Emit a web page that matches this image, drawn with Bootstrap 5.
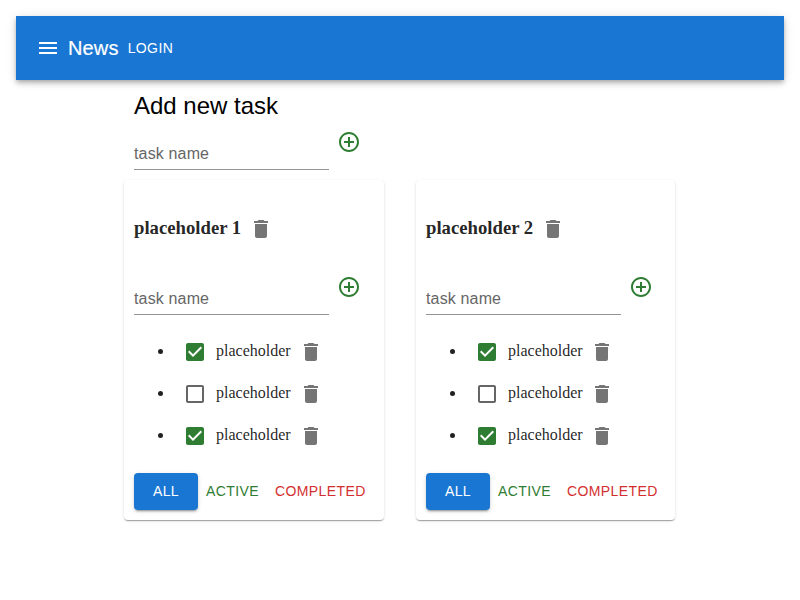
<!DOCTYPE html>
<html lang="en">
<head>
<meta charset="utf-8">
<meta name="viewport" content="width=device-width, initial-scale=1">
<title>News</title>
<link href="https://cdn.jsdelivr.net/npm/bootstrap@5.3.0/dist/css/bootstrap.min.css" rel="stylesheet">
<style>
  body { font-family: "Liberation Sans", Arial, sans-serif; color: #000; background: #fff; }
  svg { width: 24px; height: 24px; fill: currentColor; display: block; flex: none; }
  .app-bar { height: 64px; background: #1976d2; padding: 0 20px;
    box-shadow: 0 2px 4px -1px rgba(0,0,0,.2), 0 4px 5px rgba(0,0,0,.14), 0 1px 10px rgba(0,0,0,.12); }
  .app-title { font-size: 20px; line-height: 32px; letter-spacing: .15px; margin-right: 1px; -webkit-text-stroke: .2px #fff; }
  .btn { --bs-btn-font-size: 14px; --bs-btn-line-height: 24.5px; --bs-btn-padding-y: 6px; --bs-btn-padding-x: 8px;
    --bs-btn-border-radius: 4px; border: 0; letter-spacing: .4px; flex: none; }
  .btn-all { width: 64px; background: #1976d2; color: #fff;
    box-shadow: 0 3px 1px -2px rgba(0,0,0,.2), 0 2px 2px rgba(0,0,0,.14), 0 1px 5px rgba(0,0,0,.12); }
  .tone-green { color: #2e7d32; }
  .tone-red { color: #d32f2f; }
  .tone-grey { color: #757575; }
  .tone-dim { color: #666; }
  .board { width: 552px; }
  .new-board { padding: 10px 10px 0; height: 100px; }
  .board-title { font-size: 24px; line-height: 32px; }
  .boards { gap: 32px; }
  .task-field { width: 195px; height: 48px; padding: 16px 0 0; border: 0; border-bottom: 1px solid #949494; border-radius: 0;
    font-size: 16px; line-height: 23px; letter-spacing: .15px; color: #000; }
  .task-field::placeholder { color: #666; opacity: 1; }
  .add-btn { padding: 8px; line-height: 1; }
  .task-card { width: 260px; height: 340px; border: 0; border-radius: 4px; padding: 0 10px; color: rgba(0,0,0,.87);
    font-family: "Liberation Serif", "Times New Roman", serif;
    box-shadow: 0 2px 1px -1px rgba(0,0,0,.2), 0 1px 1px rgba(0,0,0,.14), 0 1px 3px rgba(0,0,0,.12); }
  .task-card + .task-card { width: 259px; }
  .task-card .btn, .task-card input { font-family: "Liberation Sans", Arial, sans-serif; }
  .card-heading { font-size: 18.72px; line-height: 22px; padding-top: 10px; height: 87px; }
  .card-heading span { padding-bottom: 2px; margin-right: 8px; }
  .task-list { padding-left: 40px; font-size: 16px; line-height: 40px; margin-top: 16px; }
  .task-list li { height: 42px; }
  .item-line { height: 42px; vertical-align: top; }
  .item-line > svg:first-child { margin: 0 9px; }
  .item-name { padding-bottom: 2px; margin-right: 9px; width: 74px; white-space: nowrap; }
  .task-card + .task-card .item-name { margin-right: 8px; }
</style>
</head>
<body class="d-flex flex-column min-vh-100">
<svg class="d-none" aria-hidden="true">
  <symbol id="menu" viewBox="0 0 24 24"><path d="M3 18h18v-2H3v2zm0-5h18v-2H3v2zm0-7v2h18V6H3z"/></symbol>
  <symbol id="add" viewBox="0 0 24 24"><path d="M13 7h-2v4H7v2h4v4h2v-4h4v-2h-4V7zm-1-5C6.480 2 2 6.480 2 12s4.480 10 10 10 10-4.480 10-10S17.520 2 12 2zm0 18c-4.410 0-8-3.590-8-8s3.590-8 8-8 8 3.590 8 8-3.590 8-8 8z"/></symbol>
  <symbol id="trash" viewBox="0 0 24 24"><path d="M6 19c0 1.100.9 2 2 2h8c1.100 0 2-.9 2-2V7H6v12zM19 4h-3.500l-1-1h-5l-1 1H5v2h14V4z"/></symbol>
  <symbol id="checked" viewBox="0 0 24 24"><path d="M19 3H5c-1.110 0-2 .9-2 2v14c0 1.100.89 2 2 2h14c1.110 0 2-.9 2-2V5c0-1.100-.89-2-2-2zm-9 14l-5-5 1.410-1.410L10 14.170l7.590-7.590L19 8l-9 9z"/></symbol>
  <symbol id="unchecked" viewBox="0 0 24 24"><path d="M19 5v14H5V5h14m0-2H5c-1.100 0-2 .9-2 2v14c0 1.100.9 2 2 2h14c1.100 0 2-.9 2-2V5c0-1.100-.9-2-2-2z"/></symbol>
</svg>

<header class="app-bar d-flex align-items-center text-white m-3 mb-0">
  <svg><use href="#menu"/></svg>
  <span class="app-title ms-2">News</span>
  <button class="btn text-white">LOGIN</button>
</header>

<main class="board mx-auto flex-grow-1">
  <section class="new-board">
    <h1 class="board-title fw-normal mb-0">Add new task</h1>
    <div class="d-flex align-items-start">
      <input class="task-field" placeholder="task name">
      <button class="btn add-btn tone-green" aria-label="Add"><svg><use href="#add"/></svg></button>
    </div>
  </section>
  <div class="boards d-flex">
    <article class="card task-card">
      <h3 class="card-heading d-flex align-items-center mb-0 fw-bold"><span>placeholder 1</span><svg class="tone-grey"><use href="#trash"/></svg></h3>
      <div class="d-flex align-items-start">
        <input class="task-field" placeholder="task name">
        <button class="btn add-btn tone-green" aria-label="Add"><svg><use href="#add"/></svg></button>
      </div>
      <ul class="task-list mb-3">
        <li><span class="item-line d-inline-flex align-items-center"><svg class="tone-green"><use href="#checked"/></svg><span class="item-name">placeholder</span><svg class="tone-grey"><use href="#trash"/></svg></span></li>
        <li><span class="item-line d-inline-flex align-items-center"><svg class="tone-dim"><use href="#unchecked"/></svg><span class="item-name">placeholder</span><svg class="tone-grey"><use href="#trash"/></svg></span></li>
        <li><span class="item-line d-inline-flex align-items-center"><svg class="tone-green"><use href="#checked"/></svg><span class="item-name">placeholder</span><svg class="tone-grey"><use href="#trash"/></svg></span></li>
      </ul>
      <div class="d-flex"><button class="btn btn-all">ALL</button><button class="btn tone-green">ACTIVE</button><button class="btn tone-red">COMPLETED</button></div>
    </article>
    <article class="card task-card">
      <h3 class="card-heading d-flex align-items-center mb-0 fw-bold"><span>placeholder 2</span><svg class="tone-grey"><use href="#trash"/></svg></h3>
      <div class="d-flex align-items-start">
        <input class="task-field" placeholder="task name">
        <button class="btn add-btn tone-green" aria-label="Add"><svg><use href="#add"/></svg></button>
      </div>
      <ul class="task-list mb-3">
        <li><span class="item-line d-inline-flex align-items-center"><svg class="tone-green"><use href="#checked"/></svg><span class="item-name">placeholder</span><svg class="tone-grey"><use href="#trash"/></svg></span></li>
        <li><span class="item-line d-inline-flex align-items-center"><svg class="tone-dim"><use href="#unchecked"/></svg><span class="item-name">placeholder</span><svg class="tone-grey"><use href="#trash"/></svg></span></li>
        <li><span class="item-line d-inline-flex align-items-center"><svg class="tone-green"><use href="#checked"/></svg><span class="item-name">placeholder</span><svg class="tone-grey"><use href="#trash"/></svg></span></li>
      </ul>
      <div class="d-flex"><button class="btn btn-all">ALL</button><button class="btn tone-green">ACTIVE</button><button class="btn tone-red">COMPLETED</button></div>
    </article>
  </div>
</main>
<script src="https://cdn.jsdelivr.net/npm/bootstrap@5.3.0/dist/js/bootstrap.bundle.min.js"></script>
</body>
</html>
